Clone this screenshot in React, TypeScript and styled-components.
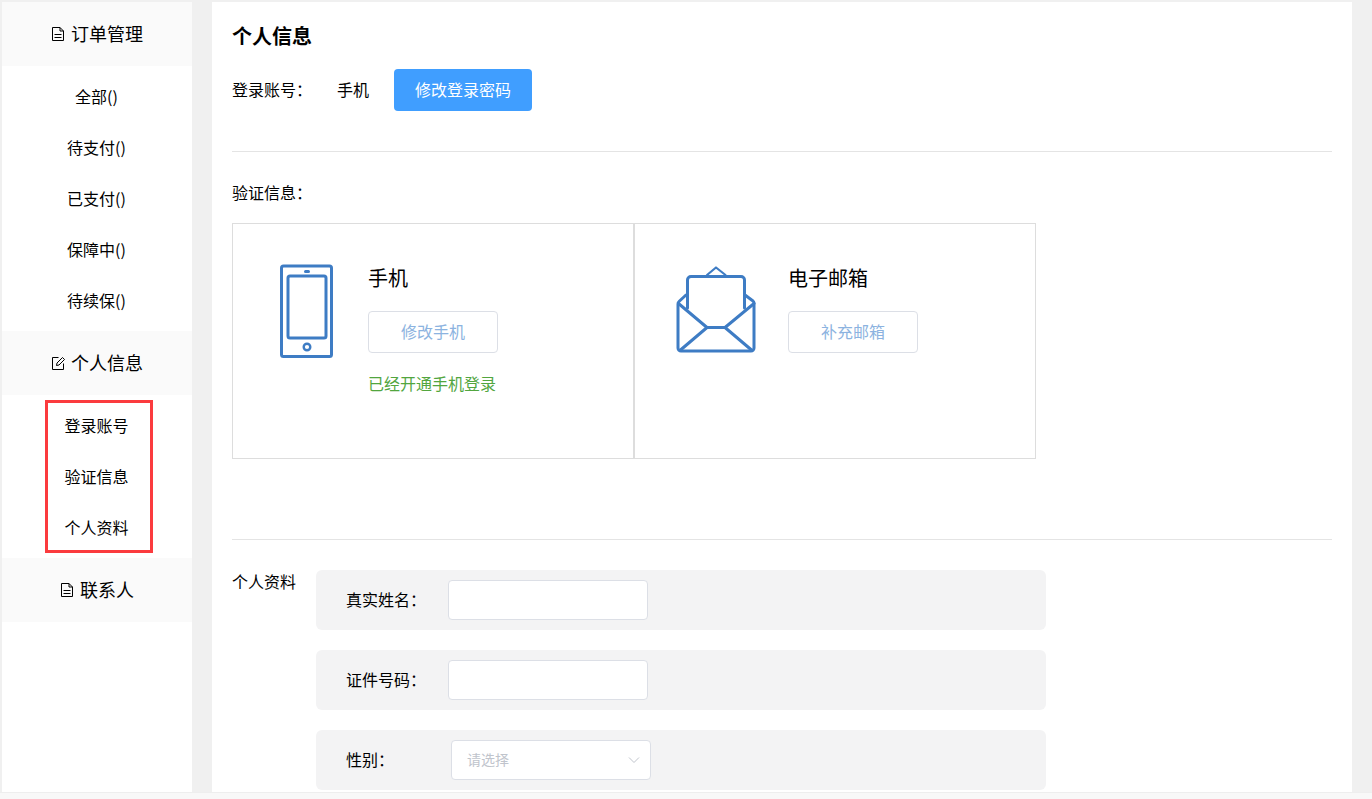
import React from "react";
import styled, { createGlobalStyle } from "styled-components";

const Global = createGlobalStyle`
  html, body { margin: 0; padding: 0; height: 100%; overflow: hidden; background: #f0f0f0; }
  body { font-family: "Noto Sans CJK SC", "Liberation Sans", sans-serif; color: #000; }
  * { box-sizing: border-box; }
`;

const Page = styled.div`
  height: 799px;
  display: flex;
  flex-direction: column;
  background: #f0f0f0;
`;
const Body = styled.div`
  flex: 1;
  min-height: 0;
  display: flex;
  gap: 20px;
  padding: 2px 0 0 2px;
  overflow: hidden;
`;
const Footer = styled.div`
  height: 7px;
  flex: none;
  background: #f8f8f8;
  border-top: 1px solid #eeeeee;
`;
const Sidebar = styled.nav`
  width: 190px;
  flex: none;
  background: #fff;
`;
const GroupHead = styled.div`
  height: 64px;
  background: #fafafa;
  display: flex;
  align-items: center;
  justify-content: center;
  gap: 6px;
  font-size: 18px;
  line-height: 24px;
`;
const HeadText = styled.span`
  margin-bottom: 2px;
`;
const GroupList = styled.ul`
  position: relative;
  list-style: none;
  margin: 0;
  padding: 6px 0 4px;
`;
const GroupItem = styled.li`
  height: 51px;
  display: flex;
  align-items: center;
  justify-content: center;
  font-size: 16px;
  padding: 0 1px 4px 0;
`;
const Annotation = styled.div`
  position: absolute;
  left: 43px;
  top: 5px;
  width: 108px;
  height: 153px;
  border: 3px solid #fb3b3e;
  pointer-events: none;
`;
const Main = styled.main`
  width: 1140px;
  flex: none;
  background: #fff;
  padding: 20px 20px 0;
`;
const Title = styled.h1`
  margin: 0;
  font-size: 20px;
  font-weight: 700;
  line-height: 28px;
`;
const AccountRow = styled.div`
  margin-top: 19px;
  display: flex;
  align-items: center;
  height: 42px;
  font-size: 16px;
`;
const AccountLabel = styled.span`
  width: 105px;
  padding-bottom: 2px;
`;
const AccountValue = styled.span`
  width: 57px;
  padding-bottom: 2px;
`;
const PrimaryButton = styled.button`
  width: 138px;
  height: 42px;
  border: none;
  border-radius: 4px;
  background: #409eff;
  color: #fff;
  font: inherit;
  padding: 0 0 2px;
`;
const Divider = styled.hr<{ $top: number }>`
  margin: ${(p) => p.$top}px 0 0;
  border: none;
  height: 1px;
  background: #e4e4e4;
`;
const SectionLabel = styled.div`
  margin-top: 28px;
  margin-bottom: 19px;
  font-size: 16px;
  line-height: 24px;
`;
const Cards = styled.div`
  display: flex;
`;
const Card = styled.section<{ $left: number; $gap: number }>`
  width: 402px;
  height: 236px;
  border: 1px solid #dddddd;
  padding: 40px 0 0 ${(p) => p.$left}px;
  display: flex;
  align-items: flex-start;
  gap: ${(p) => p.$gap}px;
`;
const IconSlot = styled.div<{ $top: number }>`
  flex: none;
  display: flex;
  margin-top: ${(p) => p.$top}px;
`;
const CardBody = styled.div`
  display: flex;
  flex-direction: column;
  align-items: flex-start;
`;
const CardName = styled.div`
  font-size: 20px;
  line-height: 28px;
`;
const GhostButton = styled.button`
  margin-top: 19px;
  width: 130px;
  height: 42px;
  background: #fff;
  border: 1px solid #dcdfe6;
  border-radius: 4px;
  color: #8cb3e0;
  font: inherit;
  font-size: 16px;
  padding: 0 0 2px;
`;
const StatusText = styled.div`
  margin-top: 18px;
  font-size: 16px;
  line-height: 24px;
  color: #52a63f;
`;
const Profile = styled.div`
  margin-top: 30px;
  display: flex;
`;
const ProfileLabel = styled.div`
  width: 84px;
  flex: none;
  font-size: 16px;
  line-height: 22px;
`;
const Fields = styled.div`
  display: flex;
  flex-direction: column;
  gap: 20px;
`;
const FieldRow = styled.div`
  width: 730px;
  height: 60px;
  background: #f3f3f4;
  border-radius: 6px;
  padding-left: 30px;
  display: flex;
  align-items: center;
`;
const FieldLabel = styled.label<{ $width: number }>`
  width: ${(p) => p.$width}px;
  flex: none;
  font-size: 16px;
  padding-bottom: 2px;
`;
const TextInput = styled.input`
  width: 200px;
  height: 40px;
  background: #fff;
  border: 1px solid #dcdfe6;
  border-radius: 4px;
  outline: none;
`;
const SelectBox = styled.div`
  width: 200px;
  height: 40px;
  background: #fff;
  border: 1px solid #dcdfe6;
  border-radius: 4px;
  padding: 0 10px 0 15px;
  display: flex;
  align-items: center;
  justify-content: space-between;
  font-size: 14px;
  color: #c0c4cc;
`;
const Placeholder = styled.span`
  margin-bottom: 2px;
`;

const DocIcon = () => (
  <svg width="14" height="16" viewBox="0 0 14 16" fill="none" stroke="#000" strokeWidth="1">
    <path d="M1.5 1.5h7.5l3.5 3.5v9.5h-11z" />
    <path d="M9 1.5v3.5h3.5" />
    <path d="M3.5 8.5h7M3.5 11.5h7" />
  </svg>
);
const EditIcon = () => (
  <svg width="14" height="16" viewBox="0 0 14 16" fill="none" stroke="#000" strokeWidth="1">
    <path d="M7.5 2.5h-6v12h11v-6" />
    <path d="M5.5 10.5l.5-2.5 5.5-5.5 2 2-5.5 5.5z" />
  </svg>
);
const PhoneIcon = () => (
  <svg width="54" height="94" viewBox="0 0 54 94" fill="none" stroke="#3e7cc4">
    <rect x="1.5" y="2" width="50" height="90.5" rx="2" strokeWidth="3" />
    <rect x="8" y="12" width="38" height="62" rx="2" strokeWidth="3" />
    <path d="M25.5 7.5h3" strokeWidth="3" strokeLinecap="round" />
    <circle cx="27" cy="83" r="3.3" strokeWidth="2.4" />
  </svg>
);
const MailIcon = () => (
  <svg width="80" height="88" viewBox="0 0 80 88" fill="none" stroke="#3e7cc4" strokeWidth="3" strokeLinejoin="round" strokeLinecap="round">
    <path d="M31 9l9-7.5 9.5 7.5" strokeWidth="2.2" />
    <path d="M11.5 42V14a3.5 3.5 0 0 1 3.5-3.5h50a3.5 3.5 0 0 1 3.5 3.5v28" />
    <path d="M10 29l-7 6.5a3 3 0 0 0-1 2.5v44a3 3 0 0 0 3 3h70a3 3 0 0 0 3-3V37a3 3 0 0 0-1-2l-8-6" />
    <path d="M2.5 37.5L31 61.5h18L78 37.5" />
    <path d="M4.5 84L31 61.5M75.5 84L49 61.5" />
  </svg>
);
const Chevron = () => (
  <svg width="12" height="8" viewBox="0 0 12 8" fill="none" stroke="#c0c4cc" strokeWidth="1">
    <path d="M1 1.5l5 5 5-5" />
  </svg>
);

export default function App() {
  return (
    <Page>
      <Global />
      <Body>
        <Sidebar>
          <GroupHead><DocIcon /><HeadText>订单管理</HeadText></GroupHead>
          <GroupList>
            {["全部()", "待支付()", "已支付()", "保障中()", "待续保()"].map((t) => (
              <GroupItem key={t}>{t}</GroupItem>
            ))}
          </GroupList>
          <GroupHead><EditIcon /><HeadText>个人信息</HeadText></GroupHead>
          <GroupList>
            {["登录账号", "验证信息", "个人资料"].map((t) => (
              <GroupItem key={t}>{t}</GroupItem>
            ))}
            <Annotation />
          </GroupList>
          <GroupHead><DocIcon /><HeadText>联系人</HeadText></GroupHead>
        </Sidebar>
        <Main>
          <Title>个人信息</Title>
          <AccountRow>
            <AccountLabel>登录账号：</AccountLabel>
            <AccountValue>手机</AccountValue>
            <PrimaryButton>修改登录密码</PrimaryButton>
          </AccountRow>
          <Divider $top={40} />
          <SectionLabel>验证信息：</SectionLabel>
          <Cards>
            <Card $left={47} $gap={34}>
              <IconSlot $top={0}><PhoneIcon /></IconSlot>
              <CardBody>
                <CardName>手机</CardName>
                <GhostButton>修改手机</GhostButton>
                <StatusText>已经开通手机登录</StatusText>
              </CardBody>
            </Card>
            <Card $left={41} $gap={32}>
              <IconSlot $top={2}><MailIcon /></IconSlot>
              <CardBody>
                <CardName>电子邮箱</CardName>
                <GhostButton>补充邮箱</GhostButton>
              </CardBody>
            </Card>
          </Cards>
          <Divider $top={80} />
          <Profile>
            <ProfileLabel>个人资料</ProfileLabel>
            <Fields>
              <FieldRow>
                <FieldLabel $width={102}>真实姓名：</FieldLabel>
                <TextInput />
              </FieldRow>
              <FieldRow>
                <FieldLabel $width={102}>证件号码：</FieldLabel>
                <TextInput />
              </FieldRow>
              <FieldRow>
                <FieldLabel $width={105}>性别：</FieldLabel>
                <SelectBox><Placeholder>请选择</Placeholder><Chevron /></SelectBox>
              </FieldRow>
            </Fields>
          </Profile>
        </Main>
      </Body>
      <Footer />
    </Page>
  );
}
